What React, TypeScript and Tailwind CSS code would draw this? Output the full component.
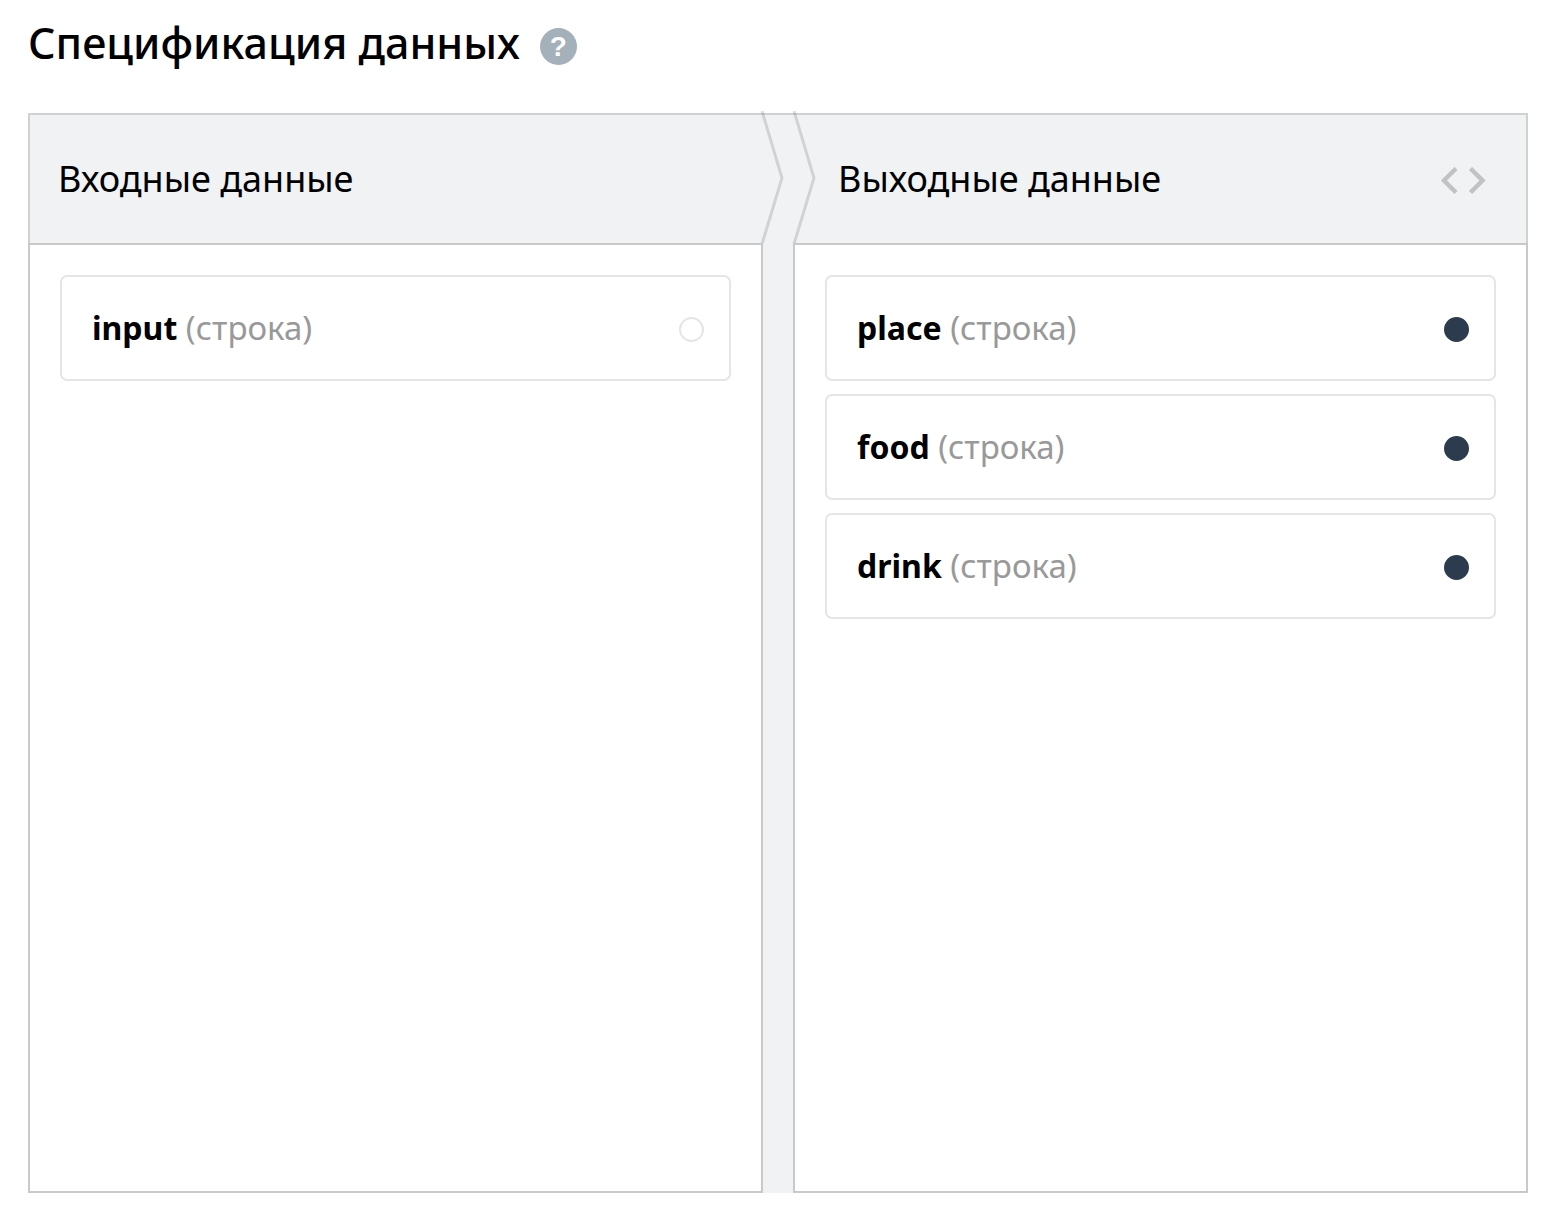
import React from 'react';

interface Field {
  name: string;
  type: string;
  required: boolean;
}

const inputFields: Field[] = [{ name: 'input', type: 'строка', required: false }];

const outputFields: Field[] = [
  { name: 'place', type: 'строка', required: true },
  { name: 'food', type: 'строка', required: true },
  { name: 'drink', type: 'строка', required: true },
];

const FieldList: React.FC<{ fields: Field[] }> = ({ fields }) => (
  <ul className="flex flex-col gap-[13px] border-2 border-[#c9c9c9] bg-white p-[30px]">
    {fields.map((field) => (
      <li key={field.name}>
        <label className="flex h-[106px] items-center justify-between rounded-[7px] border-2 border-[#e5e5e5] pl-[30px] pr-[25px]">
          <span className="text-[33px] leading-10 text-[#999999]">
            <b className="text-[32px] font-bold text-black">{field.name}</b> ({field.type})
          </span>
          <input
            type="checkbox"
            defaultChecked={field.required}
            className="mt-[3px] size-[25px] shrink-0 appearance-none rounded-full border-2 border-[#e5e5e5] bg-white checked:border-[#2c3c4e] checked:bg-[#2c3c4e]"
          />
        </label>
      </li>
    ))}
  </ul>
);

const App: React.FC = () => {
  return (
    <main className="flex min-h-screen flex-col bg-white pb-[27px] pl-7 pr-8 font-['Noto_Sans',sans-serif] text-black">
      <div className="flex h-[113px] items-start gap-5 pt-3.5">
        <h1 className="text-[43px] font-medium leading-[58px]">Спецификация данных</h1>
        <button
          type="button"
          aria-label="Справка"
          className="mt-3.5 flex size-[37px] items-center justify-center rounded-full bg-[#a4b0ba] font-['Liberation_Sans',sans-serif] text-[28px] font-bold leading-8 text-white"
        >
          ?
        </button>
      </div>

      <section className="flex flex-1 flex-col bg-[#f0f2f4]">
        <header className="grid h-[130px] grid-cols-[1fr_30px_1fr] border-2 border-b-0 border-[#d0d1d1]">
          <div className="flex items-center pl-7">
            <h2 className="text-[36px] leading-[48px]">Входные данные</h2>
          </div>
          {/* Arrow between the two columns */}
          <svg
            viewBox="0 0 30 128"
            className="h-32 w-[30px] overflow-visible"
            fill="none"
            stroke="#000000"
            strokeOpacity="0.13"
            strokeWidth="3"
            aria-hidden="true"
          >
            <path d="M-1 -4 L19 63 L-1 129" />
            <path d="M31 -4 L51 63 L31 129" />
          </svg>
          <div className="flex items-center justify-between pl-[45px] pr-10">
            <h2 className="text-[36px] leading-[48px]">Выходные данные</h2>
            <button type="button" aria-label="Показать код" className="mt-1">
              <svg viewBox="0 0 46 28" className="h-7 w-[46px]" fill="none" stroke="#c1c3c3" strokeWidth="4.5">
                <path d="M16 1.5 L4 13.5 L16 25.5" />
                <path d="M30.5 1.5 L42.5 13.5 L30.5 25.5" />
              </svg>
            </button>
          </div>
        </header>
        <div className="grid flex-1 grid-cols-[1fr_30px_1fr]">
          <FieldList fields={inputFields} />
          <div />
          <FieldList fields={outputFields} />
        </div>
      </section>
    </main>
  );
};

export default App;
